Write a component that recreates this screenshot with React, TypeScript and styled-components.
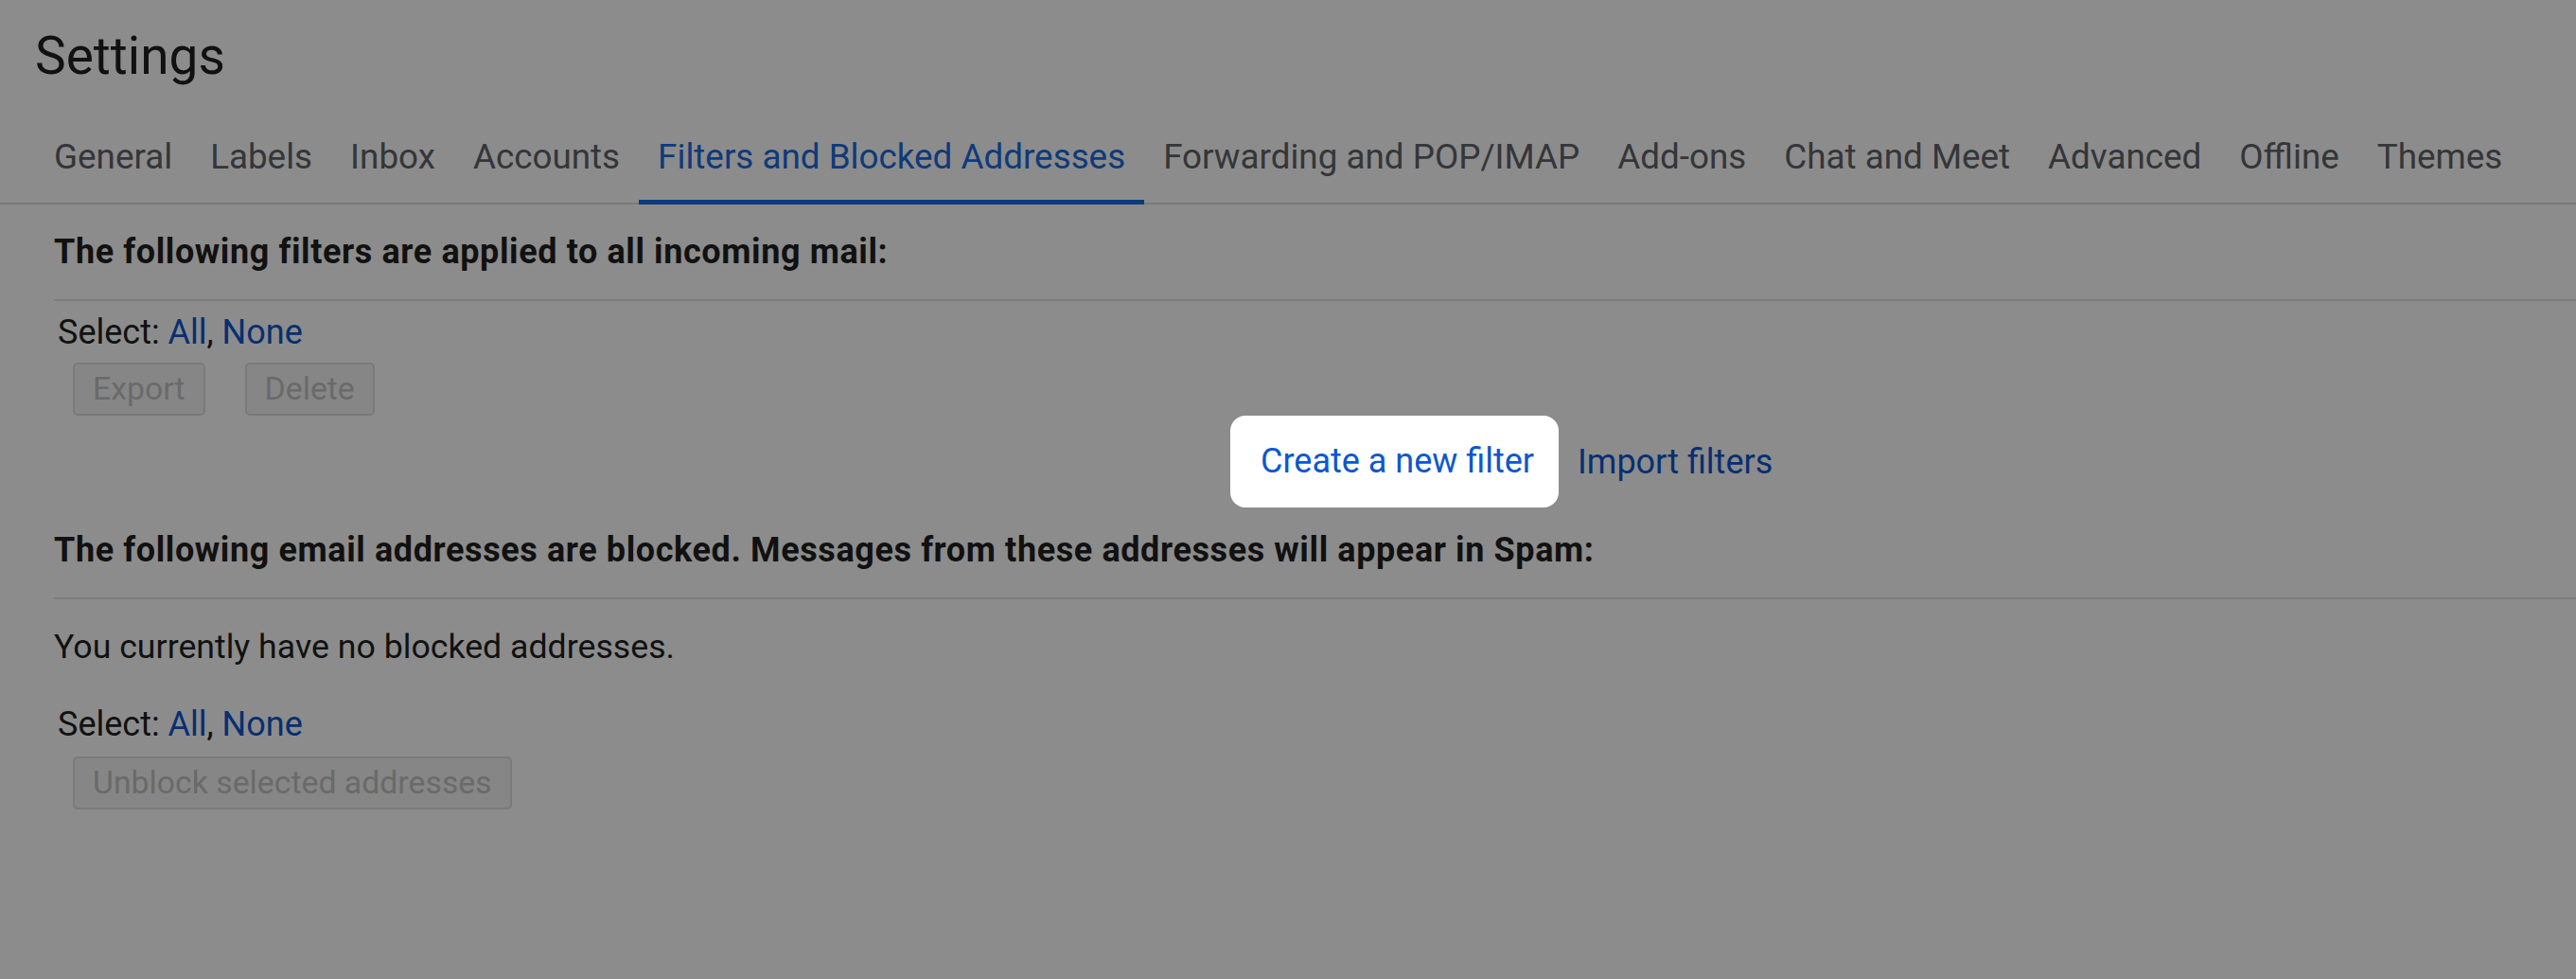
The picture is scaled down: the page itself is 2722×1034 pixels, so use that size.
import styled, {createGlobalStyle, css} from "styled-components";

const GlobalStyle = createGlobalStyle`
  html, body {
    margin: 0;
    padding: 0;
    background: #ffffff;
  }
  body {
    font-family: Roboto, "Liberation Sans", Arial, sans-serif;
    color: #1f1f1f;
  }
`;

const TABS = [
  "General",
  "Labels",
  "Inbox",
  "Accounts",
  "Filters and Blocked Addresses",
  "Forwarding and POP/IMAP",
  "Add-ons",
  "Chat and Meet",
  "Advanced",
  "Offline",
  "Themes",
];
const ACTIVE_TAB = "Filters and Blocked Addresses";

const App = () => {
  return (
    <>
      <GlobalStyle />
      <Page>
        <Title>Settings</Title>
        <TabBar>
          {TABS.map(tab => (
            <Tab key={tab} $active={tab === ACTIVE_TAB}>
              {tab}
            </Tab>
          ))}
        </TabBar>

        <Section>
          <SectionHeading>
            The following filters are applied to all incoming mail:
          </SectionHeading>
          <Divider />
          <SelectRow>
            Select: <TextLink href="#">All</TextLink>,{" "}
            <TextLink href="#">None</TextLink>
          </SelectRow>
          <ButtonRow>
            <GreyButton disabled>Export</GreyButton>
            <GreyButton disabled>Delete</GreyButton>
          </ButtonRow>
          <FilterActions>
            <Spotlight href="#">Create a new filter</Spotlight>
            <TextLink href="#">Import filters</TextLink>
          </FilterActions>

          <SectionHeading $spaced>
            The following email addresses are blocked. Messages from these
            addresses will appear in Spam:
          </SectionHeading>
          <Divider />
          <EmptyNote>You currently have no blocked addresses.</EmptyNote>
          <SelectRow $gap={42}>
            Select: <TextLink href="#">All</TextLink>,{" "}
            <TextLink href="#">None</TextLink>
          </SelectRow>
          <ButtonRow $gap={14}>
            <GreyButton disabled>Unblock selected addresses</GreyButton>
          </ButtonRow>
        </Section>
      </Page>
    </>
  );
};

const Page = styled.div`
  min-height: 1034px;
  overflow: hidden;
`;

const Title = styled.h1`
  margin: 0;
  padding: 27px 0 0 37px;
  font-size: 55px;
  line-height: 64px;
  font-weight: 400;
  color: #1f1f1f;
`;

const TabBar = styled.nav`
  display: flex;
  margin-top: 28px;
  padding-left: 37px;
  border-bottom: 2px solid #dadce0;
`;

const Tab = styled.div<{$active?: boolean}>`
  position: relative;
  padding: 25px 20px 26px;
  font-size: 36.8px;
  line-height: 44px;
  color: #5f6368;
  white-space: nowrap;
  ${p =>
    p.$active &&
    css`
      color: #1a6ae0;
      &::after {
        content: "";
        position: absolute;
        left: 0;
        right: 0;
        bottom: -2px;
        height: 5px;
        background: #1a6ae0;
      }
    `}
`;

const Section = styled.div`
  padding-left: 57px;
`;

const SectionHeading = styled.h2<{$spaced?: boolean}>`
  margin: ${p => (p.$spaced ? "25px" : "30px")} 0 0;
  font-size: 36px;
  line-height: 40px;
  font-weight: 700;
  letter-spacing: 0.6px;
  color: #1f1f1f;
  white-space: nowrap;
`;

const Divider = styled.hr`
  margin: 30px 0 0;
  border: 0;
  border-top: 2px solid #e3e3e3;
`;

const SelectRow = styled.div<{$gap?: number}>`
  margin-top: ${p => p.$gap ?? 13}px;
  padding-left: 4px;
  font-size: 36px;
  line-height: 40px;
  color: #1f1f1f;
`;

const TextLink = styled.a`
  color: #0b57d0;
  text-decoration: none;
  font-size: 36px;
  line-height: 40px;
`;

const ButtonRow = styled.div<{$gap?: number}>`
  display: flex;
  gap: 42px;
  margin-top: ${p => p.$gap ?? 12}px;
  padding-left: 20px;
`;

const GreyButton = styled.button`
  height: 56px;
  padding: 0 19px;
  border: 2px solid #dedede;
  border-radius: 5px;
  background: #f5f5f5;
  color: #c1c1c1;
  font-family: Roboto, "Liberation Sans", Arial, sans-serif;
  font-size: 33.8px;
  line-height: 40px;
`;

const FilterActions = styled.div`
  display: flex;
  align-items: center;
  gap: 20px;
  padding-left: 1243px;
`;

// white cut-out in the dimmed page, the shadow is the dim layer
const Spotlight = styled.a`
  position: relative;
  display: inline-block;
  padding: 28px 26px 29px 32px;
  border-radius: 16px;
  background: #ffffff;
  color: #0b57d0;
  text-decoration: none;
  font-size: 36px;
  line-height: 40px;
  &::after {
    content: "";
    position: absolute;
    inset: 0;
    border-radius: 16px;
    box-shadow: 0 0 0 6000px rgba(0, 0, 0, 0.45);
    pointer-events: none;
    z-index: 5;
  }
`;

const EmptyNote = styled.p`
  margin: 30px 0 0;
  font-size: 35.7px;
  line-height: 40px;
  color: #1f1f1f;
`;

export default App;
